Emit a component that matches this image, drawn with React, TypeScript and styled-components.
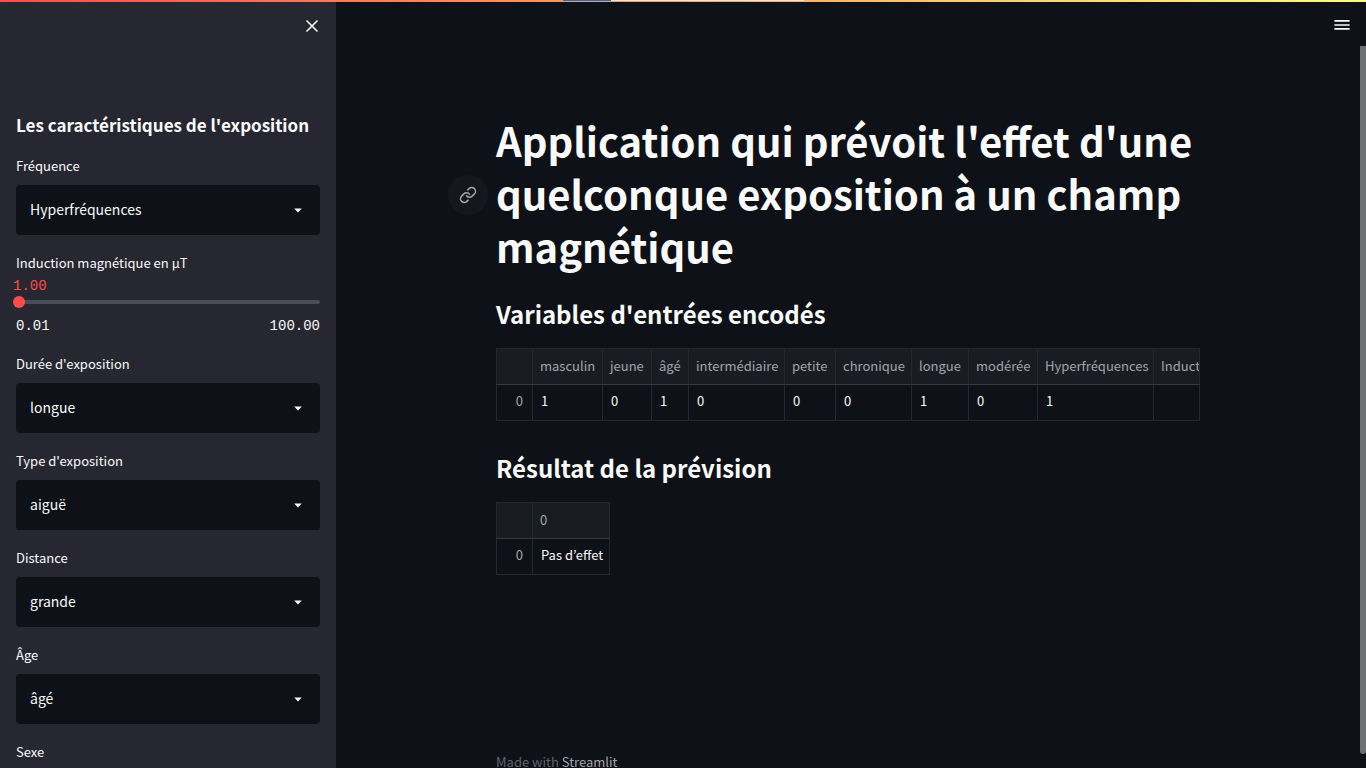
import React, { useId, useState } from "react";
import styled, { createGlobalStyle } from "styled-components";

const sans = `"Source Sans Pro", "Noto Sans CJK KR", "Noto Sans", sans-serif`;
const mono = `"Liberation Mono", monospace`;

const color = {
  page: "#0e1117",
  panel: "#262730",
  text: "#fafafa",
  muted: "#a3a4a8",
  faint: "#62646a",
  primary: "#ff4b4b",
  rail: "#4a4c57",
  line: "#26282e",
  head: "#1a1c24",
};

const GlobalStyle = createGlobalStyle`
  *, *::before, *::after { box-sizing: border-box; }
  body {
    margin: 0;
    background: ${color.page};
    color: ${color.text};
    font-family: ${sans};
    font-size: 13px;
  }
  h1, h2, h3, p { margin: 0; }
`;

const Shell = styled.div`
  position: relative;
  display: flex;
  height: 100vh;
  overflow: hidden;
`;

const Decoration = styled.div`
  position: absolute;
  inset: 0 0 auto;
  z-index: 3;
  height: 2px;
  background: linear-gradient(90deg, ${color.primary}, #fffd80);
`;

const LoadingStrip = styled.div`
  position: absolute;
  top: 0;
  left: 563px;
  width: 241px;
  height: 1px;
  background: linear-gradient(90deg, #0078d7 20%, #e6e6e6 20%);
`;

const IconButton = styled.button`
  display: flex;
  padding: 0;
  border: 0;
  background: none;
  color: ${color.text};
  cursor: pointer;
`;

const Sidebar = styled.aside`
  flex: 0 0 336px;
  overflow: hidden;
  padding: 0 16px;
  background: ${color.panel};
`;

const SidebarTop = styled.div`
  display: flex;
  justify-content: flex-end;
  height: 112px;
  padding-top: 18px;
`;

const SidebarTitle = styled.h3`
  margin-bottom: 16px;
  font-size: 17px;
  font-weight: 700;
  line-height: 26px;
  white-space: nowrap;
`;

const Fields = styled.form`
  display: flex;
  flex-direction: column;
  gap: 16px;
`;

const Field = styled.div`
  display: flex;
  flex-direction: column;
`;

const Label = styled.label`
  margin-bottom: 8px;
  font-size: 13px;
  line-height: 23px;
`;

const SelectBox = styled.div`
  display: grid;
  align-items: center;
  > * { grid-area: 1 / 1; }
  > svg {
    justify-self: end;
    margin-right: 12px;
    pointer-events: none;
  }
`;

const Select = styled.select`
  appearance: none;
  width: 100%;
  height: 50px;
  padding: 0 36px 2px 14px;
  border: 0;
  border-radius: 4px;
  background: ${color.page};
  color: ${color.text};
  font: 14px ${sans};
`;

const SliderValue = styled.output`
  margin: -6px -3px 0;
  color: ${color.primary};
  font: 14px/20px ${mono};
`;

const SliderBox = styled.div`
  display: grid;
  align-items: center;
  height: 12px;
  > * { grid-area: 1 / 1; }
`;

const Rail = styled.div`
  height: 4px;
  border-radius: 4px;
  background: ${color.rail};
`;

const Range = styled.input`
  appearance: none;
  height: 12px;
  margin: 0 -6px;
  background: none;
  &::-webkit-slider-thumb {
    appearance: none;
    width: 12px;
    height: 12px;
    border-radius: 50%;
    background: ${color.primary};
  }
`;

const Ticks = styled.div`
  display: flex;
  justify-content: space-between;
  padding-top: 8px;
  font: 14px/20px ${mono};
`;

const Main = styled.main`
  position: relative;
  flex: 1;
  min-width: 0;
  padding-right: 6px;
  overflow: hidden;
`;

const Toolbar = styled.header`
  display: flex;
  justify-content: flex-end;
  height: 46px;
  padding: 17px 10px 0 0;
`;

const Scrollbar = styled.div`
  position: absolute;
  top: 46px;
  right: 0;
  bottom: 14px;
  width: 6px;
  border-radius: 0 0 3px 3px;
  background: #6e6f73;
`;

const Content = styled.div`
  max-width: 736px;
  margin: 0 auto;
  padding: 68px 16px 177px;
`;

const TitleRow = styled.div`
  position: relative;
`;

const Title = styled.h1`
  font-size: 40px;
  font-weight: 700;
  line-height: 53px;
`;

const Anchor = styled.a`
  position: absolute;
  top: 50%;
  right: 100%;
  display: grid;
  place-items: center;
  width: 40px;
  height: 40px;
  margin: -19px 8px 0 0;
  border-radius: 50%;
  background: #14171e;
  color: #a3a4a8;
`;

const Heading = styled.h2<{ $gap: number }>`
  margin: ${(p) => p.$gap}px 0 18px;
  font-size: 24px;
  font-weight: 700;
  line-height: 32px;
`;

const Table = styled.table<{ $width: string }>`
  width: ${(p) => p.$width};
  table-layout: fixed;
  border-collapse: collapse;
  font-size: 13px;
  line-height: 20px;
  th, td {
    height: 36px;
    padding: 0 0 2px 7px;
    border: 1px solid ${color.line};
    text-align: left;
    font-weight: 400;
    white-space: nowrap;
    overflow: hidden;
  }
  td { padding: 0 0 4px 8px; }
  th { color: ${color.muted}; }
  thead th {
    border-bottom-color: #383a40;
    background: ${color.head};
  }
  tbody th {
    padding: 0 9px 4px 0;
    text-align: right;
  }
`;

const Footer = styled.footer`
  max-width: 736px;
  margin: 0 auto;
  padding: 0 16px;
  color: ${color.faint};
  font-size: 13px;
  line-height: 20px;
  a {
    color: ${color.muted};
    text-decoration: none;
  }
`;

function SelectField({ label, options }: { label: string; options: string[] }) {
  const id = useId();
  return (
    <Field>
      <Label htmlFor={id}>{label}</Label>
      <SelectBox>
        <Select id={id}>
          {options.map((o) => (
            <option key={o}>{o}</option>
          ))}
        </Select>
        <svg width="20" height="20" viewBox="0 0 20 20" fill={color.text} aria-hidden="true">
          <path d="M6.2 8.6h7.6L10 12.4z" />
        </svg>
      </SelectBox>
    </Field>
  );
}

function SliderField() {
  const id = useId();
  const [value, setValue] = useState(1);
  return (
    <Field>
      <Label htmlFor={id}>Induction magnétique en µT</Label>
      <SliderValue htmlFor={id}>{value.toFixed(2)}</SliderValue>
      <SliderBox>
        <Rail />
        <Range
          id={id}
          type="range"
          min={0.01}
          max={100}
          step={0.01}
          value={value}
          onChange={(e) => setValue(Number(e.target.value))}
        />
      </SliderBox>
      <Ticks>
        <span>0.01</span>
        <span>100.00</span>
      </Ticks>
    </Field>
  );
}

type Column = { name: string; value: string; width?: number };

const inputs: Column[] = [
  { name: "masculin", value: "1", width: 70 },
  { name: "jeune", value: "0", width: 49 },
  { name: "âgé", value: "1", width: 37 },
  { name: "intermédiaire", value: "0", width: 96 },
  { name: "petite", value: "0", width: 51 },
  { name: "chronique", value: "0", width: 76 },
  { name: "longue", value: "1", width: 57 },
  { name: "modérée", value: "0", width: 69 },
  { name: "Hyperfréquences", value: "1", width: 116 },
  { name: "Induct", value: "" },
];

const results: Column[] = [{ name: "0", value: "Pas d’effet" }];

function DataTable({ columns, width }: { columns: Column[]; width: string }) {
  return (
    <Table $width={width}>
      <colgroup>
        <col width={36} />
        {columns.map((c) => (
          <col key={c.name} width={c.width} />
        ))}
      </colgroup>
      <thead>
        <tr>
          <th />
          {columns.map((c) => (
            <th key={c.name} scope="col">{c.name}</th>
          ))}
        </tr>
      </thead>
      <tbody>
        <tr>
          <th scope="row">0</th>
          {columns.map((c) => (
            <td key={c.name}>{c.value}</td>
          ))}
        </tr>
      </tbody>
    </Table>
  );
}

export default function App() {
  return (
    <>
      <GlobalStyle />
      <Shell>
        <Decoration>
          <LoadingStrip />
        </Decoration>
        <Sidebar>
          <SidebarTop>
            <IconButton type="button" aria-label="Fermer">
              <svg width="16" height="16" viewBox="0 0 16 16" fill="none" stroke="currentColor" strokeWidth="1.6">
                <path d="M2.5 2.5l11 11M13.5 2.5l-11 11" />
              </svg>
            </IconButton>
          </SidebarTop>
          <SidebarTitle>Les caractéristiques de l'exposition</SidebarTitle>
          <Fields>
            <SelectField label="Fréquence" options={["Hyperfréquences"]} />
            <SliderField />
            <SelectField label="Durée d'exposition" options={["longue"]} />
            <SelectField label="Type d'exposition" options={["aiguë"]} />
            <SelectField label="Distance" options={["grande"]} />
            <SelectField label="Âge" options={["âgé"]} />
            <SelectField label="Sexe" options={["masculin"]} />
          </Fields>
        </Sidebar>
        <Main>
          <Toolbar>
            <IconButton type="button" aria-label="Menu">
              <svg width="16" height="16" viewBox="0 0 16 16" fill="currentColor">
                <path d="M0.4 3h15.2v1.8H0.4zM0.4 11h15.2v1.8H0.4z" />
                <path d="M0.4 7h15.2v2H0.4z" opacity="0.75" />
              </svg>
            </IconButton>
          </Toolbar>
          <Content>
            <TitleRow>
              <Anchor href="#titre" aria-label="Lien vers le titre">
                <svg width="18" height="18" viewBox="0 0 24 24" fill="none" stroke="currentColor" strokeWidth="2" strokeLinecap="round" strokeLinejoin="round">
                  <path d="M10 13a5 5 0 0 0 7.54.54l3-3a5 5 0 0 0-7.07-7.07l-1.72 1.71" />
                  <path d="M14 11a5 5 0 0 0-7.54-.54l-3 3a5 5 0 0 0 7.07 7.07l1.71-1.71" />
                </svg>
              </Anchor>
              <Title id="titre">
                Application qui prévoit l'effet d'une quelconque exposition à un champ magnétique
              </Title>
            </TitleRow>
            <Heading $gap={25}>Variables d'entrées encodés</Heading>
            <DataTable columns={inputs} width="100%" />
            <Heading $gap={31}>Résultat de la prévision</Heading>
            <DataTable columns={results} width="114px" />
          </Content>
          <Footer>
            Made with <a href="#streamlit">Streamlit</a>
          </Footer>
          <Scrollbar />
        </Main>
      </Shell>
    </>
  );
}
